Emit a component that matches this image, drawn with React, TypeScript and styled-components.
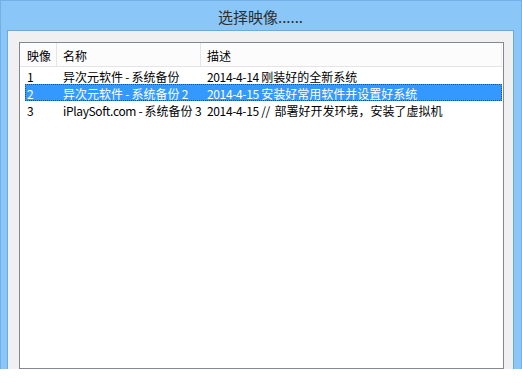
import React from 'react';
import styled, { createGlobalStyle } from 'styled-components';

const GlobalStyle = createGlobalStyle`
  html, body {
    margin: 0;
    padding: 0;
    background: #ffffff;
  }
  body {
    font-family: "Noto Sans CJK SC", "Liberation Sans", sans-serif;
  }
`;

const Window = styled.div`
  width: 522px;
  height: 369px;
  box-sizing: border-box;
  background: #8ac6f8;
  border-left: 1px solid #72b0e8;
  border-right: 1px solid #72b0e8;
  border-top: 1px solid #72b0e8;
  display: flex;
  flex-direction: column;
  padding: 0 7px 0 6px;
`;

const TitleBar = styled.div`
  height: 29px;
  display: flex;
  align-items: center;
  justify-content: center;
  font-family: "Noto Sans CJK SC", "Liberation Sans", sans-serif;
  font-size: 15px;
  color: #2e2e2e;
  padding-top: 1px;
  box-sizing: border-box;
`;

const Client = styled.div`
  flex: 1;
  background: #f0f0f0;
  border: 1px solid #6fa9dc;
  border-bottom: none;
  padding: 11px 9px 0 11px;
  display: flex;
  min-height: 0;
`;

const ListBox = styled.div`
  flex: 1;
  background: #ffffff;
  border: 1px solid #828790;
  padding: 0 1px 0 5px;
  display: flex;
  flex-direction: column;
`;

const Row = styled.div<{ $header?: boolean; $selected?: boolean }>`
  display: grid;
  grid-template-columns: 32px 144px 1fr;
  height: ${p => (p.$header ? '24px' : '17px')};
  box-sizing: border-box;
  font-family: "Noto Sans CJK SC", "Liberation Sans", sans-serif;
  font-size: 12px;
  color: ${p => (p.$selected ? '#ffffff' : '#000000')};
  background: ${p => (p.$selected ? '#3399ff' : p.$header ? '#fcfcfc' : 'transparent')};
  border-bottom: ${p => (p.$header ? '1px solid #e5e5e5' : 'none')};
  outline: ${p => (p.$selected ? '1px dotted #1a4f8a' : 'none')};
  outline-offset: -1px;
  margin-left: ${p => (p.$header ? '-5px' : '0')};
  padding-left: ${p => (p.$header ? '5px' : '0')};
`;

const Cell = styled.div<{ $first?: boolean; $header?: boolean }>`
  display: flex;
  align-items: center;
  padding-left: ${p => (p.$first ? '2px' : '6px')};
  padding-top: ${p => (p.$header ? '2px' : '1px')};
  white-space: pre;
  overflow: visible;
  border-right: ${p => (p.$header ? '1px solid #e5e5e5' : 'none')};
  &:last-child {
    border-right: ${p => (p.$header ? '1px solid #eef0f3' : 'none')};
  }
`;

// Latin runs in the Windows UI font are tighter than the fallback here
const Latin = styled.span`
  letter-spacing: -0.35px;
`;

const cjk = /([\u3000-\u9fff\uff00-\uffef]+)/;

function Mixed({ text }: { text: string }) {
  return (
    <>
      {text.split(cjk).map((part, i) =>
        !part ? null : cjk.test(part) ? <span key={i}>{part}</span> : <Latin key={i}>{part}</Latin>
      )}
    </>
  );
}

const images = [
  { id: '1', name: '异次元软件 - 系统备份', desc: '2014-4-14 刚装好的全新系统' },
  { id: '2', name: '异次元软件 - 系统备份 2', desc: '2014-4-15 安装好常用软件并设置好系统' },
  { id: '3', name: 'iPlaySoft.com - 系统备份 3', desc: '2014-4-15 //  部署好开发环境，安装了虚拟机' },
];

export default function App() {
  return (
    <>
      <GlobalStyle />
      <Window>
        <TitleBar>选择映像......</TitleBar>
        <Client>
          <ListBox>
            <Row $header>
              <Cell $header $first>映像</Cell>
              <Cell $header>名称</Cell>
              <Cell $header>描述</Cell>
            </Row>
            {images.map(img => (
              <Row key={img.id} $selected={img.id === '2'}>
                <Cell $first>{img.id}</Cell>
                <Cell><Mixed text={img.name} /></Cell>
                <Cell><Mixed text={img.desc} /></Cell>
              </Row>
            ))}
          </ListBox>
        </Client>
      </Window>
    </>
  );
}
